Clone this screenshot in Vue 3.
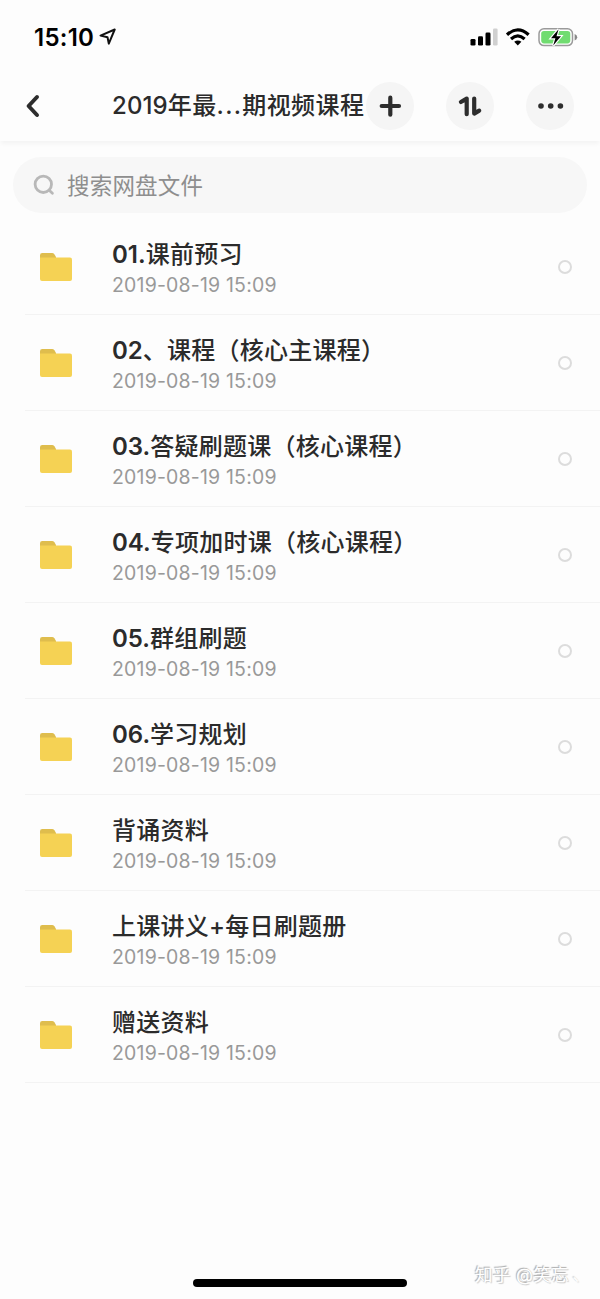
<script setup>
const files = [
  { lead: '01.', name: '课前预习' },
  { lead: '02', name: '、课程（核心主课程）' },
  { lead: '03.', name: '答疑刷题课（核心课程）' },
  { lead: '04.', name: '专项加时课（核心课程）' },
  { lead: '05.', name: '群组刷题' },
  { lead: '06.', name: '学习规划' },
  { lead: '', name: '背诵资料' },
  { lead: '', name: '上课讲义+每日刷题册' },
  { lead: '', name: '赠送资料' },
]
const modified = '2019-08-19 15:09'
</script>

<template>
  <div class="screen">
    <div class="status">
      <span class="time">15:10</span>
      <svg class="locate" width="18" height="18" viewBox="0 0 18 18">
        <path d="M1.5 7.6 L15.7 1.5 L9.8 15.6 L8.5 9.3 Z" fill="none" stroke="#111" stroke-width="2" stroke-linejoin="round" />
      </svg>
      <svg class="indicators" width="110" height="24" viewBox="0 0 110 24">
        <rect x="0.5" y="13" width="5" height="6.5" rx="1.3" />
        <rect x="8" y="10.3" width="5" height="9.2" rx="1.3" />
        <rect x="15.5" y="6.6" width="5" height="12.9" rx="1.3" />
        <rect x="23" y="2.5" width="4.6" height="17" rx="1.3" fill="#d0d0d0" />
        <g fill="none" stroke="#000" stroke-width="3.2">
          <path d="M37 8.8 Q47.8 -1 58.6 8.8" />
          <path d="M41 13 Q47.8 6.9 54.6 13" />
        </g>
        <path d="M44.2 15.8 Q47.8 13 51.4 15.8 L47.8 19.6 Z" />
        <rect x="69" y="2.8" width="33.5" height="16.8" rx="5" fill="#fff" stroke="#9a9a9a" stroke-width="1.5" />
        <rect x="71.2" y="5" width="29.1" height="12.4" rx="2.8" fill="#70dc70" />
        <path d="M104.6 8 Q107.2 8.9 107.2 11.2 Q107.2 13.5 104.6 14.4 Z" fill="#888" />
        <path d="M88.6 3.2 L81 12.3 H85.4 L83.2 19.6 L91 10.2 H86.5 Z" stroke="#fff" stroke-width="2.4" paint-order="stroke" />
      </svg>
    </div>

    <header class="nav">
      <svg class="back" width="16" height="24" viewBox="0 0 16 24">
        <path d="M12 3 L3.6 12 L12 21" fill="none" stroke="#2d2d2d" stroke-width="4" stroke-linecap="round" stroke-linejoin="round" />
      </svg>
      <h1 class="title"><span class="year">2019</span>年最<span class="dots">...</span>期视频课程</h1>
      <div class="actions">
        <button class="round">
          <svg width="48" height="48" viewBox="0 0 48 48">
            <path d="M24.3 15.7 V32.7 M15.7 24 H33" stroke="#2d2d2d" stroke-width="4.2" stroke-linecap="round" />
          </svg>
        </button>
        <button class="round">
          <svg width="48" height="48" viewBox="0 0 48 48">
            <path d="M14.9 20 L20.7 16.6 V32.2 M28.2 16.6 V31.6 L33.2 28.6" fill="none" stroke="#2d2d2d" stroke-width="4.2" stroke-linecap="round" stroke-linejoin="round" />
          </svg>
        </button>
        <button class="round">
          <svg width="48" height="48" viewBox="0 0 48 48" fill="#2d2d2d">
            <circle cx="15" cy="24" r="2.8" /><circle cx="24.7" cy="24" r="2.8" /><circle cx="34.4" cy="24" r="2.8" />
          </svg>
        </button>
      </div>
    </header>

    <div class="search">
      <svg width="24" height="24" viewBox="0 0 24 24" fill="none" stroke="#b8b8b8" stroke-width="2.8" stroke-linecap="round">
        <circle cx="11.3" cy="11.3" r="8.2" /><path d="M17.2 17.2 L20.4 20.3" />
      </svg>
      <span>搜索网盘文件</span>
    </div>

    <ul class="list">
      <li v-for="file in files" :key="file.name + file.lead" class="row">
        <svg class="folder" width="34" height="30" viewBox="0 0 34 30">
          <path d="M1 3.3 Q1 1 3.2 1 H13 Q14.6 1 15.4 2.3 L17 5 V9 H1 Z" fill="#dfbd4d" />
          <path d="M1 5.4 H31 Q33 5.4 33 7.4 V27 Q33 29 31 29 H3 Q1 29 1 27 Z" fill="#f5d254" />
        </svg>
        <div class="info">
          <div class="name"><span v-if="file.lead" class="lead">{{ file.lead }}</span>{{ file.name }}</div>
          <div class="date">{{ modified }}</div>
        </div>
        <i class="pick"></i>
      </li>
    </ul>

    <div class="home-bar"></div>
    <div class="watermark">知乎 @笑忘<span class="tail">、</span></div>
  </div>
</template>

<style>
body { margin: 0; background: #fdfdfd; }
</style>

<style scoped>
.screen {
  position: relative;
  width: 600px;
  height: 1299px;
  overflow: hidden;
  background: #fdfdfd;
  color: #2b2b2b;
  font-family: Inter, "Noto Sans CJK SC", sans-serif;
}
.status { display: flex; height: 70px; box-sizing: border-box; padding: 23px 0 0 34px; }
.time { width: 65px; font-size: 24px; line-height: 30px; font-weight: 600; color: #000; letter-spacing: 0.25px; }
.locate { margin-top: 5px; }
.indicators { margin: 3px 0 0 353px; }
.nav {
  display: flex;
  align-items: center;
  height: 71px;
  padding-left: 25px;
  box-shadow: 0 4px 4px -1px rgba(0, 0, 0, 0.04);
}
.back { flex: none; }
.title {
  flex: none;
  width: 254px;
  margin: 1px 0 0 71px;
  white-space: nowrap;
  font-size: 24px;
  line-height: 36px;
  font-weight: 500;
  letter-spacing: 0.4px;
}
.year { letter-spacing: 0.1px; }
.dots { letter-spacing: 1.3px; }
.actions { display: flex; gap: 32px; }
.round { width: 48px; height: 48px; padding: 0; border: 0; border-radius: 50%; background: #f5f5f5; }
.round svg { display: block; }
.search {
  display: flex;
  align-items: center;
  height: 56px;
  box-sizing: border-box;
  margin: 16px 13px 0;
  padding: 0 0 0 19px;
  border-radius: 28px;
  background: #f7f7f7;
  color: #8e8e8e;
  font-size: 22.5px;
  letter-spacing: 0.2px;
}
.search span { margin: -3px 0 0 11px; }
.list { list-style: none; margin: 6px 0 0; padding: 0; }
.row {
  display: flex;
  box-sizing: border-box;
  height: 96px;
  margin-left: 25px;
  padding: 15px 0 0 14px;
  border-bottom: 1.5px solid #f3f3f3;
}
.folder { margin-top: 18px; }
.info { width: 446px; margin: 3px 0 0 39px; }
.name {
  height: 35px;
  line-height: 36px;
  font-size: 24px;
  font-weight: 500;
  letter-spacing: 0.25px;
  white-space: nowrap;
}
.lead { font-weight: 600; letter-spacing: 0; }
.date { line-height: 26px; font-size: 19.5px; color: #999; font-weight: 400; letter-spacing: 0.18px; }
.pick { width: 10px; height: 10px; margin: 26px 0 0; border: 2px solid #dcdcdc; border-radius: 50%; }
.home-bar { position: absolute; left: 193px; bottom: 12px; width: 214px; height: 8px; border-radius: 4px; background: #000; }
.watermark {
  position: absolute;
  left: 475px;
  top: 1262px;
  font-size: 17.5px;
  line-height: 26px;
  letter-spacing: 0.4px;
  color: #fff;
  white-space: nowrap;
  text-shadow: -1px -1px 1px #aaa, 1px 1px 1px #ccc;
}
.tail { margin-left: 3px; opacity: 0.6; }
</style>
